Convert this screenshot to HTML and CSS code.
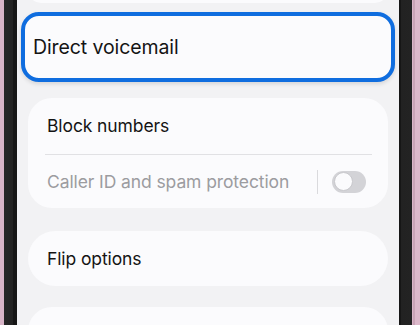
FILE: index.html
```html
<!DOCTYPE html>
<html>
<head>
<meta charset="utf-8">
<link rel="stylesheet" href="styles.css">
</head>
<body>
<div class="frame">
  <div class="edge edge-left"></div>
  <div class="bezel bezel-left"></div>
  <main class="screen">
    <div class="card card-prev"></div>
    <div class="focus-card">
      <span class="label label-focus">Direct voicemail</span>
    </div>
    <section class="card card-group">
      <div class="row row-first"><span class="label">Block numbers</span></div>
      <div class="divider"></div>
      <div class="row row-disabled">
        <span class="label label-muted">Caller ID and spam protection</span>
        <div class="controls">
          <span class="vsep"></span>
          <span class="toggle"><span class="knob"></span></span>
        </div>
      </div>
    </section>
    <section class="card card-single">
      <span class="label">Flip options</span>
    </section>
    <section class="card card-next"></section>
  </main>
  <div class="bezel bezel-right"></div>
  <div class="edge edge-right"></div>
</div>
</body>
</html>
```
FILE: styles.css
```css
* { box-sizing: border-box; }
html, body {
  margin: 0;
  padding: 0;
  width: 420px;
  height: 325px;
  overflow: hidden;
  background: #d9b3c6;
}
.frame {
  display: flex;
  width: 420px;
  height: 325px;
}
.frame > * { flex-shrink: 0; }
.edge-left {
  width: 4px;
  background: #d8b4c7;
}
.bezel-left {
  width: 13px;
  background: linear-gradient(to right, #262626 0, #222 9px, #161616 9px, #161616 13px);
}
.bezel-right {
  width: 13px;
  background: linear-gradient(to right, #161616 0, #161616 2px, #222 2px, #232323 13px);
}
.edge-right {
  width: 8px;
  background: linear-gradient(to right, #dab6c8 0, #dab6c8 1px, #c9a3b6 1px, #c9a3b6 3px, #dcb8ca 3px);
}
.screen {
  width: 382px;
  height: 325px;
  overflow: hidden;
  background: #f2f2f4;
  display: flex;
  flex-direction: column;
  font-family: "Inter", "Roboto", sans-serif;
  color: #141414;
}
.screen > * { flex-shrink: 0; }
.label {
  font-size: 17.5px;
  line-height: 22px;
  white-space: nowrap;
  letter-spacing: -0.1px;
}
.label-focus {
  font-size: 19.5px;
}
.card {
  background: #fbfbfd;
  margin: 0 11px;
}
.card-prev {
  height: 13px;
  margin-top: -10px;
  border-radius: 0 0 22px 22px;
}
.focus-card {
  margin: 9px 4px 0;
  height: 70px;
  border: 4px solid #0f6ddf;
  border-radius: 18px;
  background: #fbfbfd;
  display: flex;
  align-items: center;
  padding: 0 0 0 8px;
  box-shadow: 0 2px 4px rgba(0,0,0,0.12);
}
.card-group {
  margin-top: 16px;
  height: 110px;
  border-radius: 24px;
  display: flex;
  flex-direction: column;
  padding: 0 22px 0 19px;
}
.row {
  display: flex;
  align-items: center;
}
.row-first {
  height: 56px;
}
.divider {
  height: 1px;
  background: #e1e1e4;
  margin: 0 -6px 0 -2px;
}
.row-disabled {
  height: 53px;
  justify-content: space-between;
}
.label-muted {
  color: #9c9ca0;
}
.controls {
  display: flex;
  align-items: center;
  gap: 14px;
}
.vsep {
  width: 1px;
  height: 24px;
  background: #dadadd;
}
.toggle {
  width: 34px;
  height: 22px;
  border-radius: 11px;
  background: #d3d3d7;
  display: flex;
  align-items: center;
  padding: 0 2px;
}
.knob {
  width: 19px;
  height: 19px;
  border-radius: 50%;
  background: #fbfbfd;
  border: 1.5px solid #c8c8cc;
}
.card-single {
  margin-top: 23px;
  height: 55px;
  border-radius: 28px;
  display: flex;
  align-items: center;
  padding-left: 19px;
}
.card-next {
  margin-top: 21px;
  height: 40px;
  border-radius: 24px 24px 0 0;
}
```
